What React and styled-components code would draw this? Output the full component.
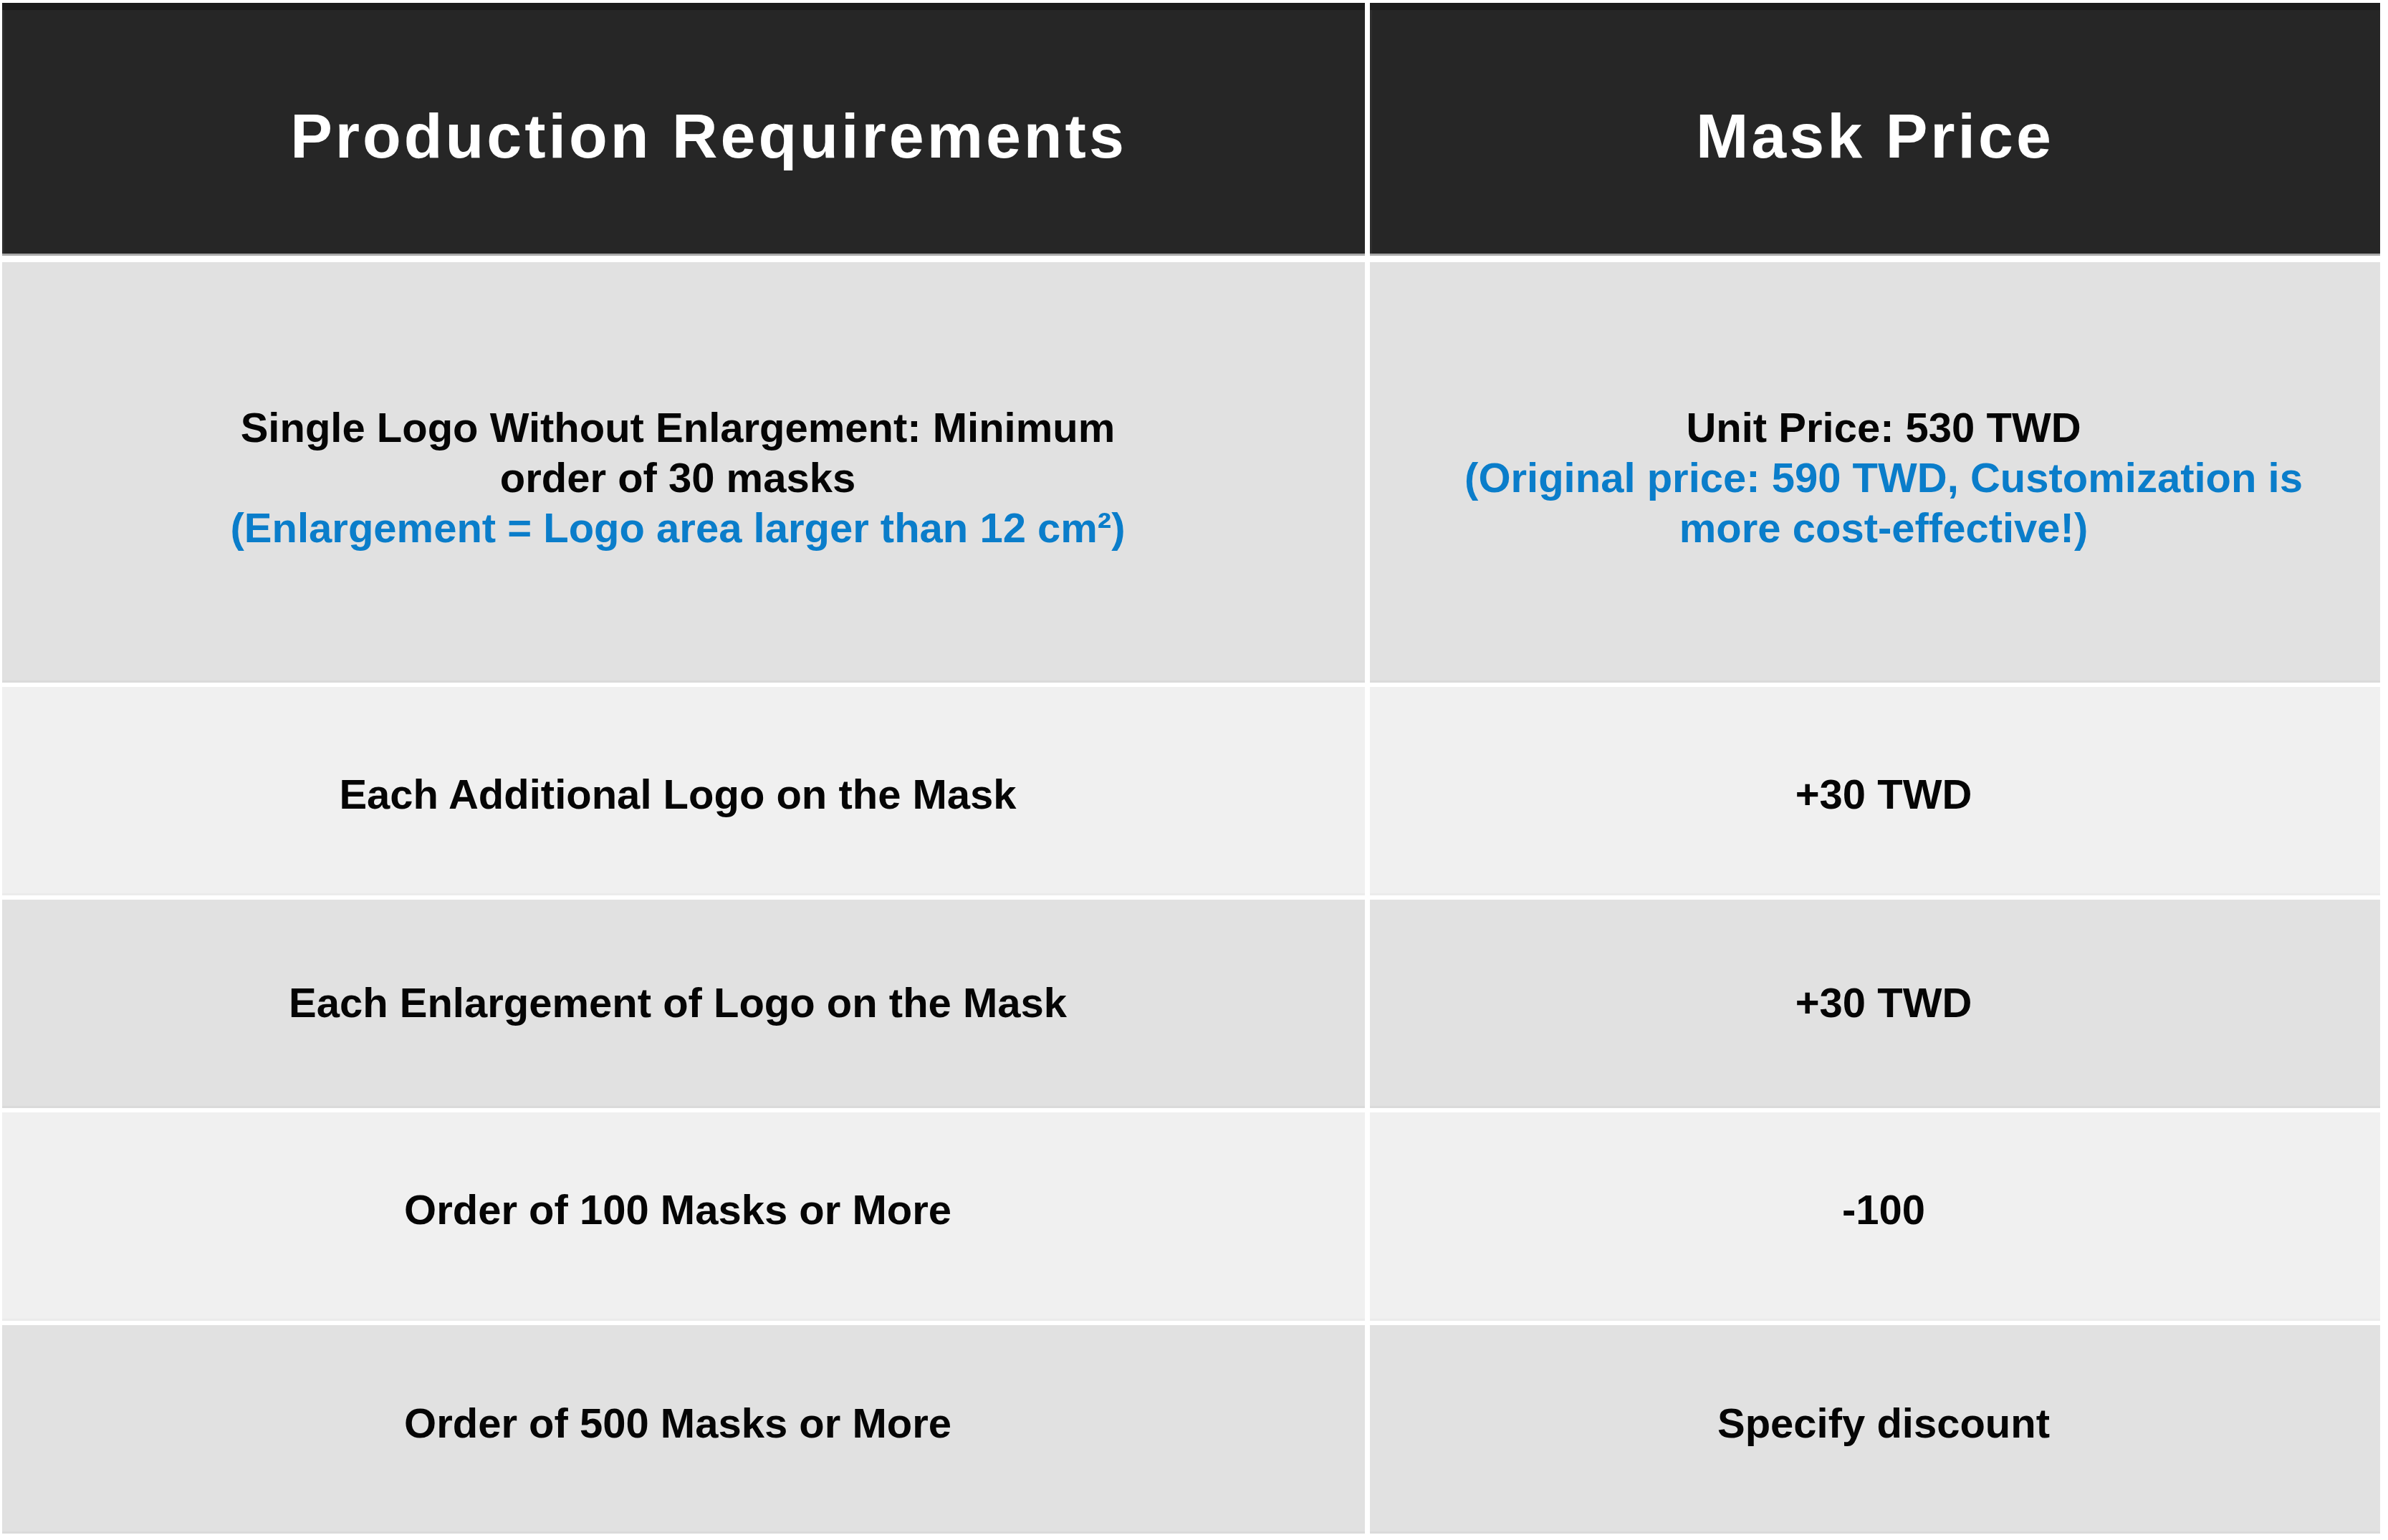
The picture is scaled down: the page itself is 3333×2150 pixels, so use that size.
import React from "react";
import styled, { createGlobalStyle } from "styled-components";

const Global = createGlobalStyle`
  html, body { margin: 0; padding: 0; background: #ffffff; }
  body { font-family: "Liberation Sans", Arial, sans-serif; }
`;

const Page = styled.div`
  width: 3333px;
  height: 2150px;
  box-sizing: border-box;
  padding: 4px 11px 0 3px;
  background: #ffffff;
`;

const Table = styled.div`
  display: grid;
  grid-template-columns: 1902px 1410px;
  grid-template-rows: 356px 587px repeat(4, 291px);
  column-gap: 7px;
  row-gap: 6px;
`;

const HeadCell = styled.div`
  display: flex;
  align-items: center;
  justify-content: center;
  padding-top: 12px;
  padding-left: ${(p) => p.$shift || 0}px;
  box-sizing: border-box;
  background: #262626;
  border-top: 10px solid #1c1c1c;
  border-bottom: 3px solid #a9a9a9;
  box-shadow: inset 3px 0 0 #2e2e2e;
  margin-bottom: 3px;
  color: #ffffff;
  font-family: "Liberation Sans", Arial, sans-serif;
  font-weight: 700;
  font-size: 88px;
  letter-spacing: 4px;
  white-space: nowrap;
`;

const Cell = styled.div`
  display: flex;
  align-items: center;
  justify-content: center;
  text-align: center;
  box-sizing: border-box;
  padding-left: ${(p) => p.$shift || 0}px;
  padding-right: ${(p) => p.$pull || 0}px;
  padding-top: ${(p) => Math.max(0, (p.$offset || 0) * 2)}px;
  padding-bottom: ${(p) => Math.max(0, -(p.$offset || 0) * 2)}px;
  background: ${(p) => (p.$alt ? "#f0f0f0" : "#e1e1e1")};
  border-bottom: 3px solid ${(p) => (p.$alt ? "#ebebeb" : "#dadada")};
  color: #050505;
  font-family: "Liberation Sans", Arial, sans-serif;
  font-weight: 700;
  font-size: 58px;
  line-height: 70px;
`;

const Note = styled.span`
  color: #0a7dca;
`;

const rows = [
  { left: "Each Additional Logo on the Mask", right: "+30 TWD", alt: true, offset: 6 },
  { left: "Each Enlargement of Logo on the Mask", right: "+30 TWD", alt: false, offset: 0 },
  { left: "Order of 100 Masks or More", right: "-100", alt: true, offset: -8 },
  { left: "Order of 500 Masks or More", right: "Specify discount", alt: false, offset: -7 },
];

export default function App() {
  return (
    <>
      <Global />
      <Page>
        <Table>
          <HeadCell $shift={70}>Production Requirements</HeadCell>
          <HeadCell>Mask Price</HeadCell>

          <Cell $offset={9} $pull={16}>
            <div>
              Single Logo Without Enlargement: Minimum
              <br />
              order of 30 masks
              <br />
              <Note>(Enlargement = Logo area larger than 12 cm²)</Note>
            </div>
          </Cell>
          <Cell $offset={9} $shift={24}>
            <div>
              Unit Price: 530 TWD
              <br />
              <Note>
                (Original price: 590 TWD, Customization is
                <br />
                more cost-effective!)
              </Note>
            </div>
          </Cell>

          {rows.map((r) => (
            <React.Fragment key={r.left}>
              <Cell $alt={r.alt} $offset={r.offset} $pull={16}>{r.left}</Cell>
              <Cell $alt={r.alt} $offset={r.offset} $shift={24}>{r.right}</Cell>
            </React.Fragment>
          ))}
        </Table>
      </Page>
    </>
  );
}
